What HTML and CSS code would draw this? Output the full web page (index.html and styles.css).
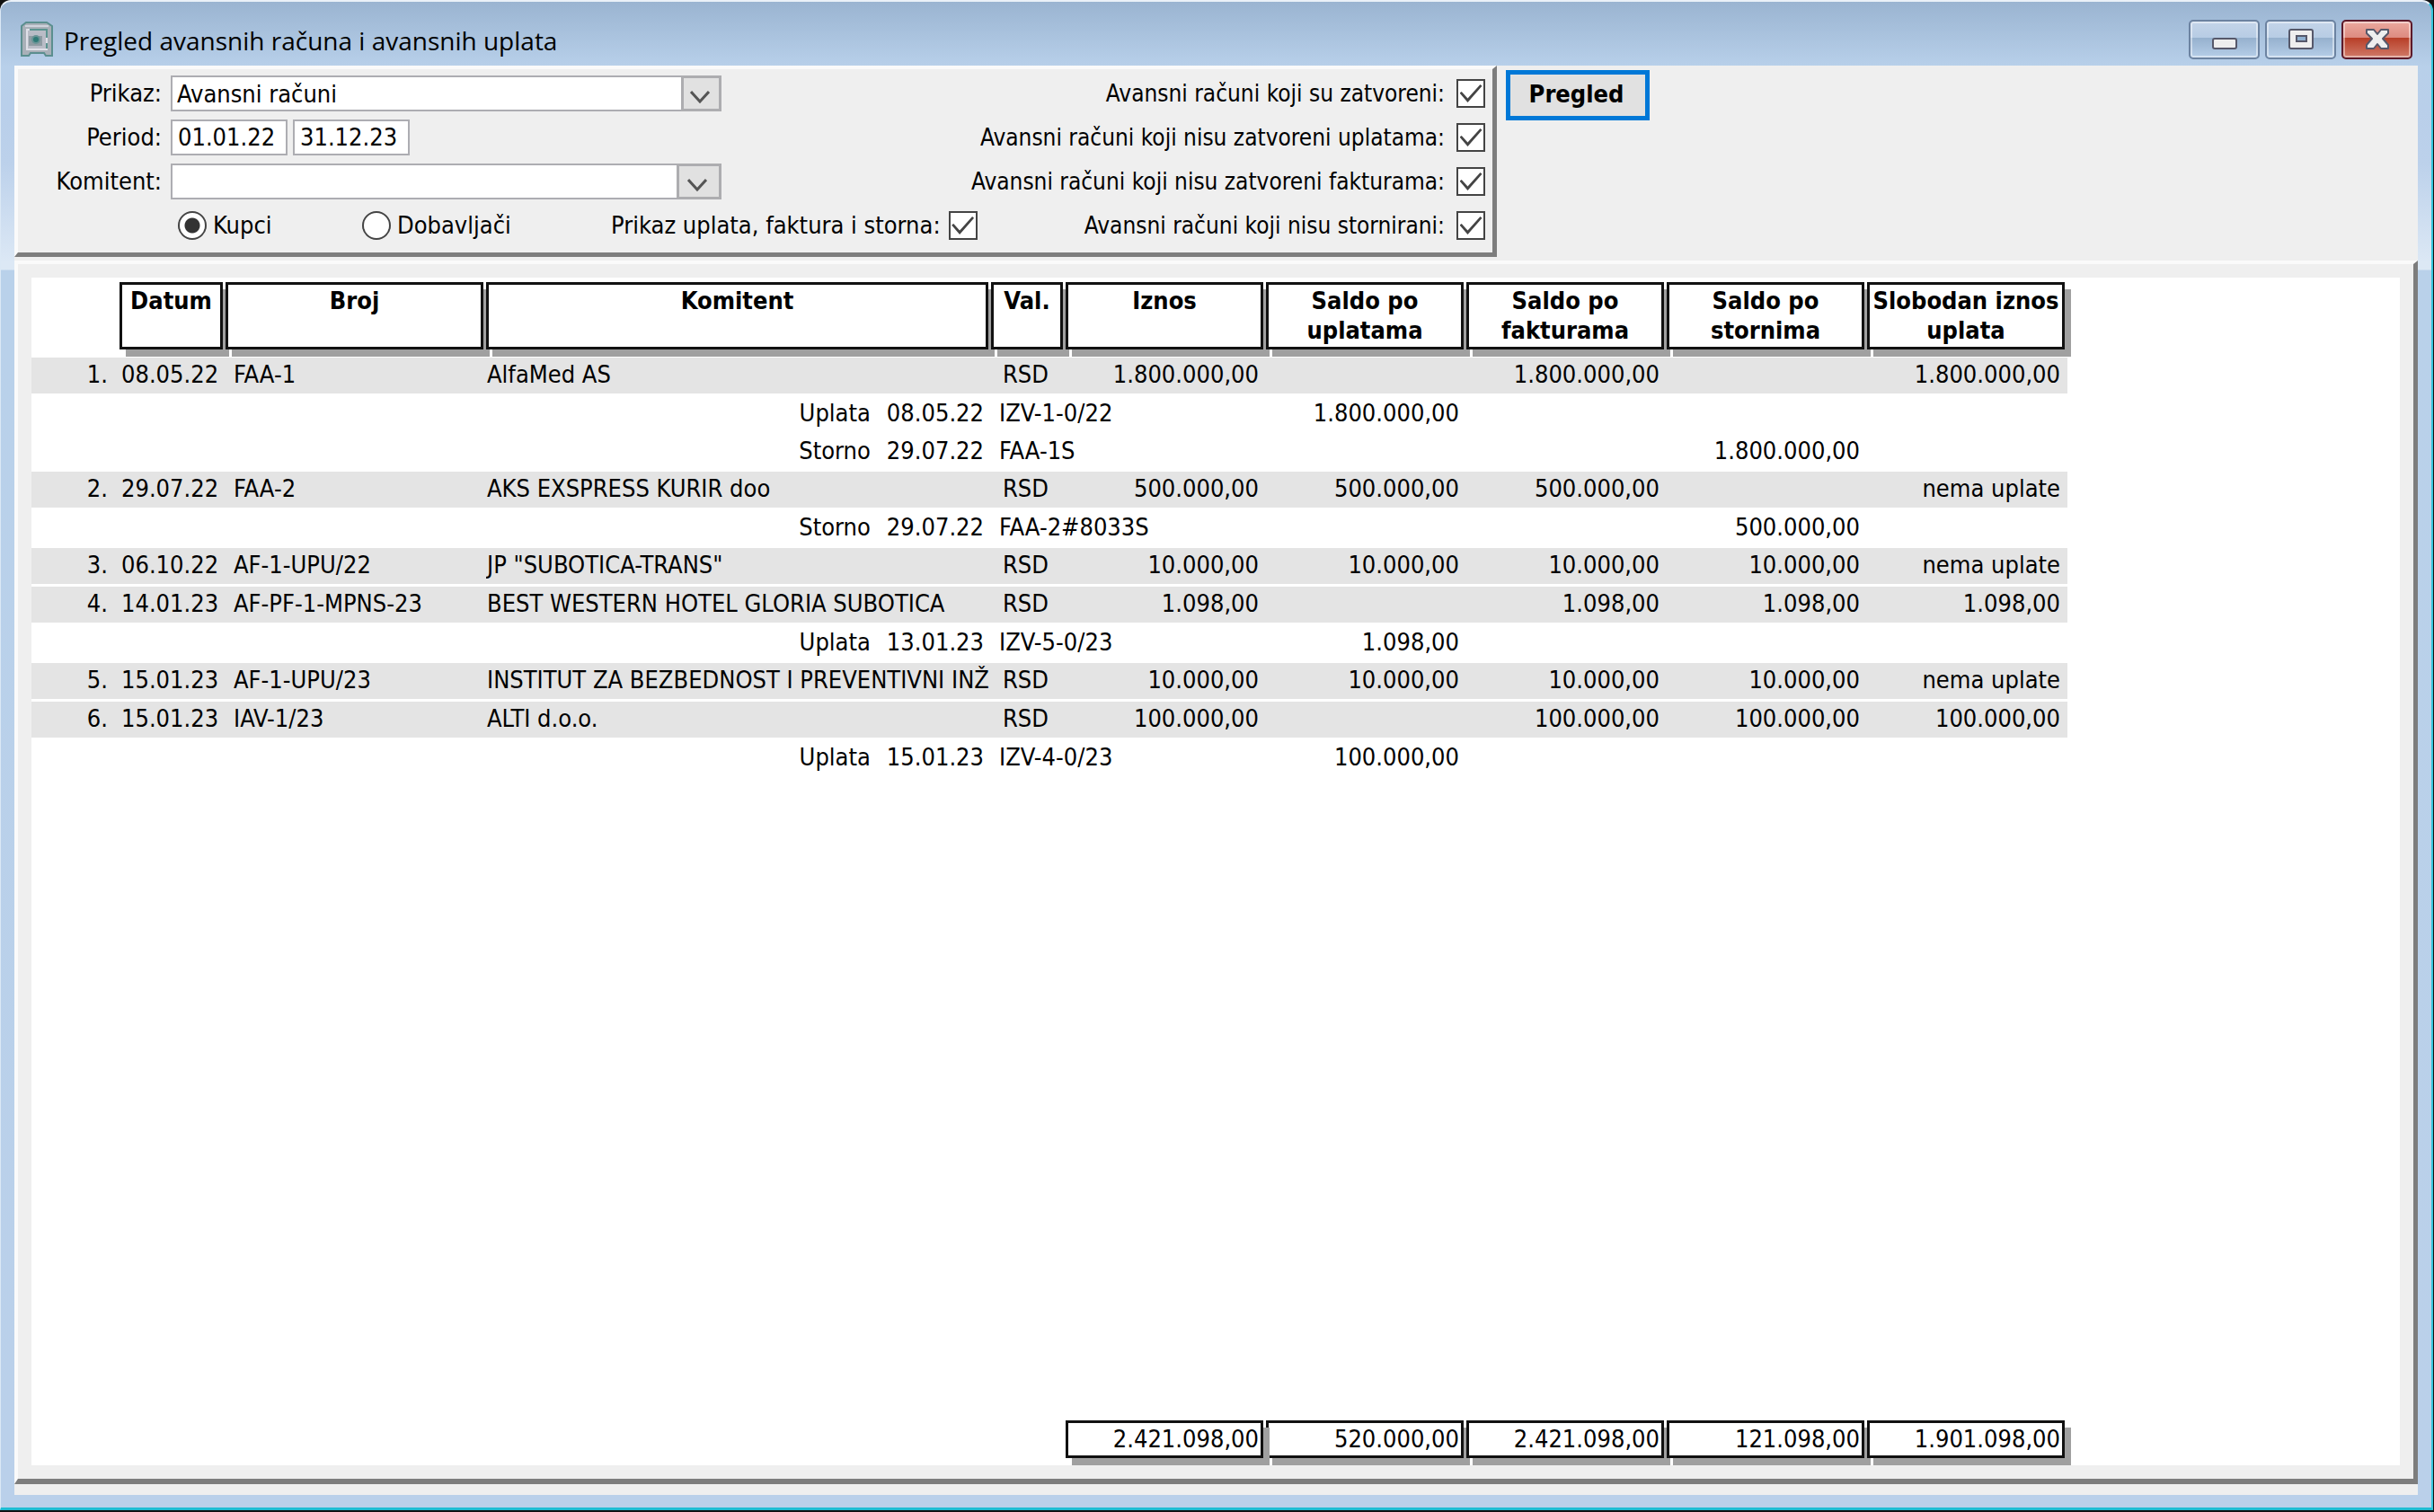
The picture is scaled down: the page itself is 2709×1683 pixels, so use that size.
FILE: index.html
```html
<!DOCTYPE html>
<html lang="sr-Latn">
<head>
<meta charset="utf-8">
<title>Pregled avansnih računa i avansnih uplata</title>
<link rel="stylesheet" href="styles.css">
</head>
<body>
<div class="window">
  <header class="titlebar">
    <svg class="app-icon" width="36" height="40" viewBox="0 0 36 40" aria-hidden="true">
      <path d="M1 38V5L6 1H29L35 5V38H28L26 35H11L9 38Z" fill="#a9b0b8" stroke="#5b8f8f" stroke-width="2"/>
      <path d="M5 5H31" stroke="#cfd3dc" stroke-width="2"/>
      <rect x="7" y="9" width="22" height="22" fill="#b9bcc6" stroke="#dfe0e8" stroke-width="2"/>
      <rect x="9" y="16" width="15" height="11" fill="#8f9ca3"/>
      <path d="M10 9H29V18M29 24V30" fill="none" stroke="#5b9490" stroke-width="2"/>
      <circle cx="17" cy="20" r="5" fill="#6a9496"/>
      <circle cx="17" cy="20" r="3" fill="#2f7a76"/>
    </svg>
    <h1 class="title">Pregled avansnih računa i avansnih uplata</h1>
    <div class="window-buttons">
      <button class="win-btn" type="button" aria-label="Minimize">
        <svg width="30" height="26" viewBox="0 0 30 26"><rect x="2" y="12" width="26" height="11" rx="2" fill="#eeeeee" stroke="#56586a" stroke-width="2"/></svg>
      </button>
      <button class="win-btn" type="button" aria-label="Maximize">
        <svg width="30" height="26" viewBox="0 0 30 26"><rect x="2" y="2" width="26" height="21" rx="2" fill="#eeeeee" stroke="#56586a" stroke-width="2"/><rect x="10" y="9" width="11" height="6" fill="#8fb0d0" stroke="#56586a" stroke-width="2"/></svg>
      </button>
      <button class="win-btn win-btn-close" type="button" aria-label="Close">
        <svg width="30" height="26" viewBox="0 0 30 26"><path d="M3 2H11L15 7L19 2H27V6L21 12L27 19V23H19L15 18L11 23H3V19L9 12L3 6Z" fill="#eeeeee" stroke="#56586a" stroke-width="2" stroke-linejoin="round"/></svg>
      </button>
    </div>
  </header>

  <main class="client">
    <form class="toolbar">
      <div class="filters">
        <div class="row">
          <label class="caption" for="prikaz">Prikaz:</label>
          <span class="combo">
            <select id="prikaz"><option>Avansni računi</option></select>
            <span class="combo-arrow"><svg width="22" height="14" viewBox="0 0 22 14"><path d="M1 1L11 12L21 1" fill="none" stroke="#555" stroke-width="3"/></svg></span>
          </span>
          <span class="check"><label for="zatvoreni">Avansni računi koji su zatvoreni:</label><input id="zatvoreni" type="checkbox" checked></span>
        </div>
        <div class="row">
          <label class="caption" for="od">Period:</label>
          <input class="date" id="od" type="text" value="01.01.22">
          <input class="date" type="text" value="31.12.23" aria-label="Period do">
          <span class="check"><label for="uplatama">Avansni računi koji nisu zatvoreni uplatama:</label><input id="uplatama" type="checkbox" checked></span>
        </div>
        <div class="row">
          <label class="caption" for="komitent">Komitent:</label>
          <span class="combo">
            <select id="komitent"><option></option></select>
            <span class="combo-arrow combo-arrow-wide"><svg width="22" height="14" viewBox="0 0 22 14"><path d="M1 1L11 12L21 1" fill="none" stroke="#555" stroke-width="3"/></svg></span>
          </span>
          <span class="check"><label for="fakturama">Avansni računi koji nisu zatvoreni fakturama:</label><input id="fakturama" type="checkbox" checked></span>
        </div>
        <div class="row">
          <span class="radios">
            <label class="radio"><input type="radio" name="vrsta" checked>Kupci</label>
            <label class="radio"><input type="radio" name="vrsta">Dobavljači</label>
          </span>
          <span class="inline-check"><label for="storna">Prikaz uplata, faktura i storna:</label><input id="storna" type="checkbox" checked></span>
          <span class="check"><label for="stornirani">Avansni računi koji nisu stornirani:</label><input id="stornirani" type="checkbox" checked></span>
        </div>
      </div>
      <button class="run" type="button">Pregled</button>
    </form>

    <section class="panel">
      <div class="report">
        <table class="grid">
          <colgroup><col class="c-no"><col class="c-date"><col class="c-doc"><col class="c-name"><col class="c-cur"><col class="c-sum"><col class="c-sum"><col class="c-sum"><col class="c-sum"><col class="c-sum"></colgroup>
          <thead>
            <tr>
              <td></td>
              <th><span class="box head">Datum</span></th>
              <th><span class="box head">Broj</span></th>
              <th><span class="box head">Komitent</span></th>
              <th><span class="box head">Val.</span></th>
              <th><span class="box head">Iznos</span></th>
              <th><span class="box head">Saldo po<br>uplatama</span></th>
              <th><span class="box head">Saldo po<br>fakturama</span></th>
              <th><span class="box head">Saldo po<br>stornima</span></th>
              <th><span class="box head">Slobodan iznos<br>uplata</span></th>
            </tr>
          </thead>
          <tbody>
            <tr class="main"><td class="no">1.</td><td class="date-cell">08.05.22</td><td class="doc">FAA-1</td><td class="name">AlfaMed AS</td><td class="cur">RSD</td><td class="num">1.800.000,00</td><td class="num"></td><td class="num">1.800.000,00</td><td class="num"></td><td class="num">1.800.000,00</td></tr>
            <tr class="sub"><td class="link" colspan="4"><span>Uplata</span><span>08.05.22</span></td><td class="doc" colspan="2">IZV-1-0/22</td><td class="num">1.800.000,00</td><td></td><td></td><td></td></tr>
            <tr class="sub"><td class="link" colspan="4"><span>Storno</span><span>29.07.22</span></td><td class="doc" colspan="2">FAA-1S</td><td></td><td></td><td class="num">1.800.000,00</td><td></td></tr>
            <tr class="main"><td class="no">2.</td><td class="date-cell">29.07.22</td><td class="doc">FAA-2</td><td class="name">AKS EXSPRESS KURIR doo</td><td class="cur">RSD</td><td class="num">500.000,00</td><td class="num">500.000,00</td><td class="num">500.000,00</td><td class="num"></td><td class="num">nema uplate</td></tr>
            <tr class="sub"><td class="link" colspan="4"><span>Storno</span><span>29.07.22</span></td><td class="doc" colspan="2">FAA-2#8033S</td><td></td><td></td><td class="num">500.000,00</td><td></td></tr>
            <tr class="main"><td class="no">3.</td><td class="date-cell">06.10.22</td><td class="doc">AF-1-UPU/22</td><td class="name">JP "SUBOTICA-TRANS"</td><td class="cur">RSD</td><td class="num">10.000,00</td><td class="num">10.000,00</td><td class="num">10.000,00</td><td class="num">10.000,00</td><td class="num">nema uplate</td></tr>
            <tr class="main"><td class="no">4.</td><td class="date-cell">14.01.23</td><td class="doc">AF-PF-1-MPNS-23</td><td class="name">BEST WESTERN HOTEL GLORIA SUBOTICA</td><td class="cur">RSD</td><td class="num">1.098,00</td><td class="num"></td><td class="num">1.098,00</td><td class="num">1.098,00</td><td class="num">1.098,00</td></tr>
            <tr class="sub"><td class="link" colspan="4"><span>Uplata</span><span>13.01.23</span></td><td class="doc" colspan="2">IZV-5-0/23</td><td class="num">1.098,00</td><td></td><td></td><td></td></tr>
            <tr class="main"><td class="no">5.</td><td class="date-cell">15.01.23</td><td class="doc">AF-1-UPU/23</td><td class="name">INSTITUT ZA BEZBEDNOST I PREVENTIVNI INŽ</td><td class="cur">RSD</td><td class="num">10.000,00</td><td class="num">10.000,00</td><td class="num">10.000,00</td><td class="num">10.000,00</td><td class="num">nema uplate</td></tr>
            <tr class="main"><td class="no">6.</td><td class="date-cell">15.01.23</td><td class="doc">IAV-1/23</td><td class="name">ALTI d.o.o.</td><td class="cur">RSD</td><td class="num">100.000,00</td><td class="num"></td><td class="num">100.000,00</td><td class="num">100.000,00</td><td class="num">100.000,00</td></tr>
            <tr class="sub"><td class="link" colspan="4"><span>Uplata</span><span>15.01.23</span></td><td class="doc" colspan="2">IZV-4-0/23</td><td class="num">100.000,00</td><td></td><td></td><td></td></tr>
          </tbody>
        </table>
        <table class="grid totals">
          <colgroup><col class="c-no"><col class="c-date"><col class="c-doc"><col class="c-name"><col class="c-cur"><col class="c-sum"><col class="c-sum"><col class="c-sum"><col class="c-sum"><col class="c-sum"></colgroup>
          <tbody>
            <tr>
              <td colspan="5"></td>
              <td><span class="box total total-front">2.421.098,00</span></td>
              <td><span class="box total">520.000,00</span></td>
              <td><span class="box total">2.421.098,00</span></td>
              <td><span class="box total">121.098,00</span></td>
              <td><span class="box total">1.901.098,00</span></td>
            </tr>
          </tbody>
        </table>
      </div>
    </section>
  </main>
</div>
</body>
</html>
```
FILE: styles.css
```css
* {
  box-sizing: border-box;
}

body {
  margin: 0;
  min-height: 100vh;
  display: flex;
  flex-direction: column;
  background: #111;
  color: #000;
  font: 27px/38px "DejaVu Sans Condensed", "DejaVu Sans", sans-serif;
  padding: 0 1px 2px 0;
}

input,
select,
button {
  margin: 0;
  font: inherit;
  color: inherit;
}

/* Window frame */
.window {
  flex: 1;
  display: flex;
  flex-direction: column;
  border-top: 2px solid #eaf1f8;
  border-left: 1px solid #dbe8f5;
  border-right: 2px solid #35c6dc;
  border-bottom: 3px solid #1fbcd2;
  border-radius: 12px 12px 0 0;
  padding: 0 15px 14px;
  background:
    linear-gradient(#9ab4d1, #b8d0ea 72px, #b9cfea 120px, #bcd1eb 180px, #dce8f5 290px, #dce8f5 298px, #b9d1ea 299px, #bad0ea);
}

.titlebar {
  display: flex;
  height: 71px;
  padding-left: 7px;
  padding-right: 6px;
}

.app-icon {
  margin-top: 22px;
}

.title {
  margin: 23px 0 0 12px;
  font: 28px/40px "Open Sans", "Noto Sans", sans-serif;
}

.window-buttons {
  display: flex;
  gap: 6px;
  margin: 20px 0 0 auto;
}

.win-btn {
  width: 79px;
  height: 44px;
  padding: 0;
  display: grid;
  place-items: center;
  border: 2px solid #6c83a1;
  border-radius: 5px;
  background: linear-gradient(#c4d5e9 0%, #b7cce4 44%, #96b1ce 46%, #b6cee8 100%);
  box-shadow: inset 0 0 0 2px rgba(255, 255, 255, 0.45);
}

.win-btn-close {
  border-color: #5c1a2a;
  background: linear-gradient(#eba99f 0%, #dd8b80 44%, #b83f28 46%, #d07a68 100%);
}

/* Client area */
.client {
  flex: 1;
  display: flex;
  flex-direction: column;
  background: #efefef;
  padding-bottom: 12px;
}

.toolbar {
  display: flex;
  align-items: flex-start;
  gap: 10px;
}

.filters {
  flex: 0 0 1650px;
  display: grid;
  grid-auto-rows: 40px;
  gap: 9px;
  padding: 7px 8px 10px 0;
  border: solid;
  border-width: 4px 5px 5px 4px;
  border-color: #fafafa #7d7d7d #7d7d7d #fafafa;
}

.row {
  display: flex;
  align-items: center;
}

.caption {
  width: 160px;
  margin-right: 10px;
  text-align: right;
}

.combo {
  width: 613px;
  display: grid;
}

.combo select,
.combo-arrow {
  grid-area: 1 / 1;
}

.combo select {
  appearance: none;
  height: 40px;
  padding: 0 50px 2px 5px;
  border: 2px solid #adadb2;
  border-radius: 0;
  background: #fff;
}

.combo-arrow {
  justify-self: end;
  width: 45px;
  display: grid;
  place-items: center;
  padding-top: 8px;
  padding-right: 4px;
  border: 3px solid #adadb0;
  background: #e1e1e1;
  pointer-events: none;
}

.combo-arrow-wide {
  width: 50px;
}

.date {
  width: 130px;
  height: 40px;
  margin-right: 6px;
  padding: 0 6px 2px;
  border: 2px solid #adadb2;
  background: #fff;
}

.check,
.inline-check {
  display: flex;
  align-items: center;
  gap: 13px;
}

.check {
  margin-left: auto;
  font-size: 26px;
}

.inline-check {
  gap: 9px;
}

.radios {
  width: 482px;
  margin-left: 178px;
  display: flex;
}

.radio {
  width: 205px;
  display: flex;
  align-items: center;
  gap: 7px;
}

input[type="checkbox"],
input[type="radio"] {
  appearance: none;
  width: 32px;
  height: 32px;
  border: 2px solid #444;
  background: #fff;
}

input[type="radio"] {
  border-radius: 50%;
}

input[type="radio"]:checked {
  background: radial-gradient(circle, #333 8px, #fff 9px);
}

input[type="checkbox"] {
  display: grid;
  place-items: center;
}

input[type="checkbox"]:checked::before {
  content: "";
  width: 25px;
  height: 20px;
  background: #444;
  clip-path: polygon(0 48%, 9% 40%, 36% 78%, 92% 0, 100% 9%, 36% 100%);
}

.run {
  width: 160px;
  height: 56px;
  margin-top: 5px;
  padding: 0 3px 2px 0;
  border: 5px solid #0078d7;
  background: #e1e1e1;
  font-weight: bold;
}

/* Report */
.panel {
  flex: 1;
  display: flex;
  margin-top: 4px;
  padding: 15px;
  border: solid;
  border-width: 4px 5px 6px 4px;
  border-color: #fafafa #7d7d7d #7d7d7d #fafafa;
}

.report {
  flex: 1;
  display: flex;
  flex-direction: column;
  justify-content: space-between;
  align-items: flex-start;
  background: #fff;
}

.grid {
  table-layout: fixed;
  width: 2265px;
  border-spacing: 0;
}

.grid td,
.grid th {
  padding: 0;
  text-align: left;
  white-space: nowrap;
}

.c-no { width: 98px; }
.c-date { width: 118px; }
.c-doc { width: 290px; }
.c-name { width: 562px; }
.c-cur { width: 83px; }
.c-sum { width: 223px; }

.box {
  display: block;
  margin-right: 3px;
  border: 3px solid #111;
  background: #fff;
  box-shadow: 7px 8px 0 #a0a0a0;
}

.head {
  height: 75px;
  margin-top: 5px;
  margin-bottom: 9px;
  padding-top: 1px;
  line-height: 33px;
  text-align: center;
}

.grid .main td {
  height: 43px;
  padding-bottom: 2px;
  border-bottom: 3px solid #fff;
  background: #e4e4e4;
}

.grid .sub td {
  height: 42px;
  padding-bottom: 4px;
}

.grid td.no {
  padding-right: 13px;
  text-align: right;
}

.grid td.date-cell {
  padding-left: 2px;
}

.grid td.doc {
  padding-left: 9px;
}

.grid td.name {
  padding-left: 1px;
  overflow: hidden;
}

.grid td.cur {
  padding-right: 6px;
  text-align: center;
}

.grid td.num {
  padding-right: 8px;
  text-align: right;
}

.grid td.link {
  padding-right: 8px;
  text-align: right;
}

.link span + span {
  margin-left: 18px;
}

.totals {
  margin-bottom: 8px;
}

.total {
  height: 42px;
  line-height: 36px;
  padding-right: 2px;
  text-align: right;
}

.total-front {
  position: relative;
}
```
